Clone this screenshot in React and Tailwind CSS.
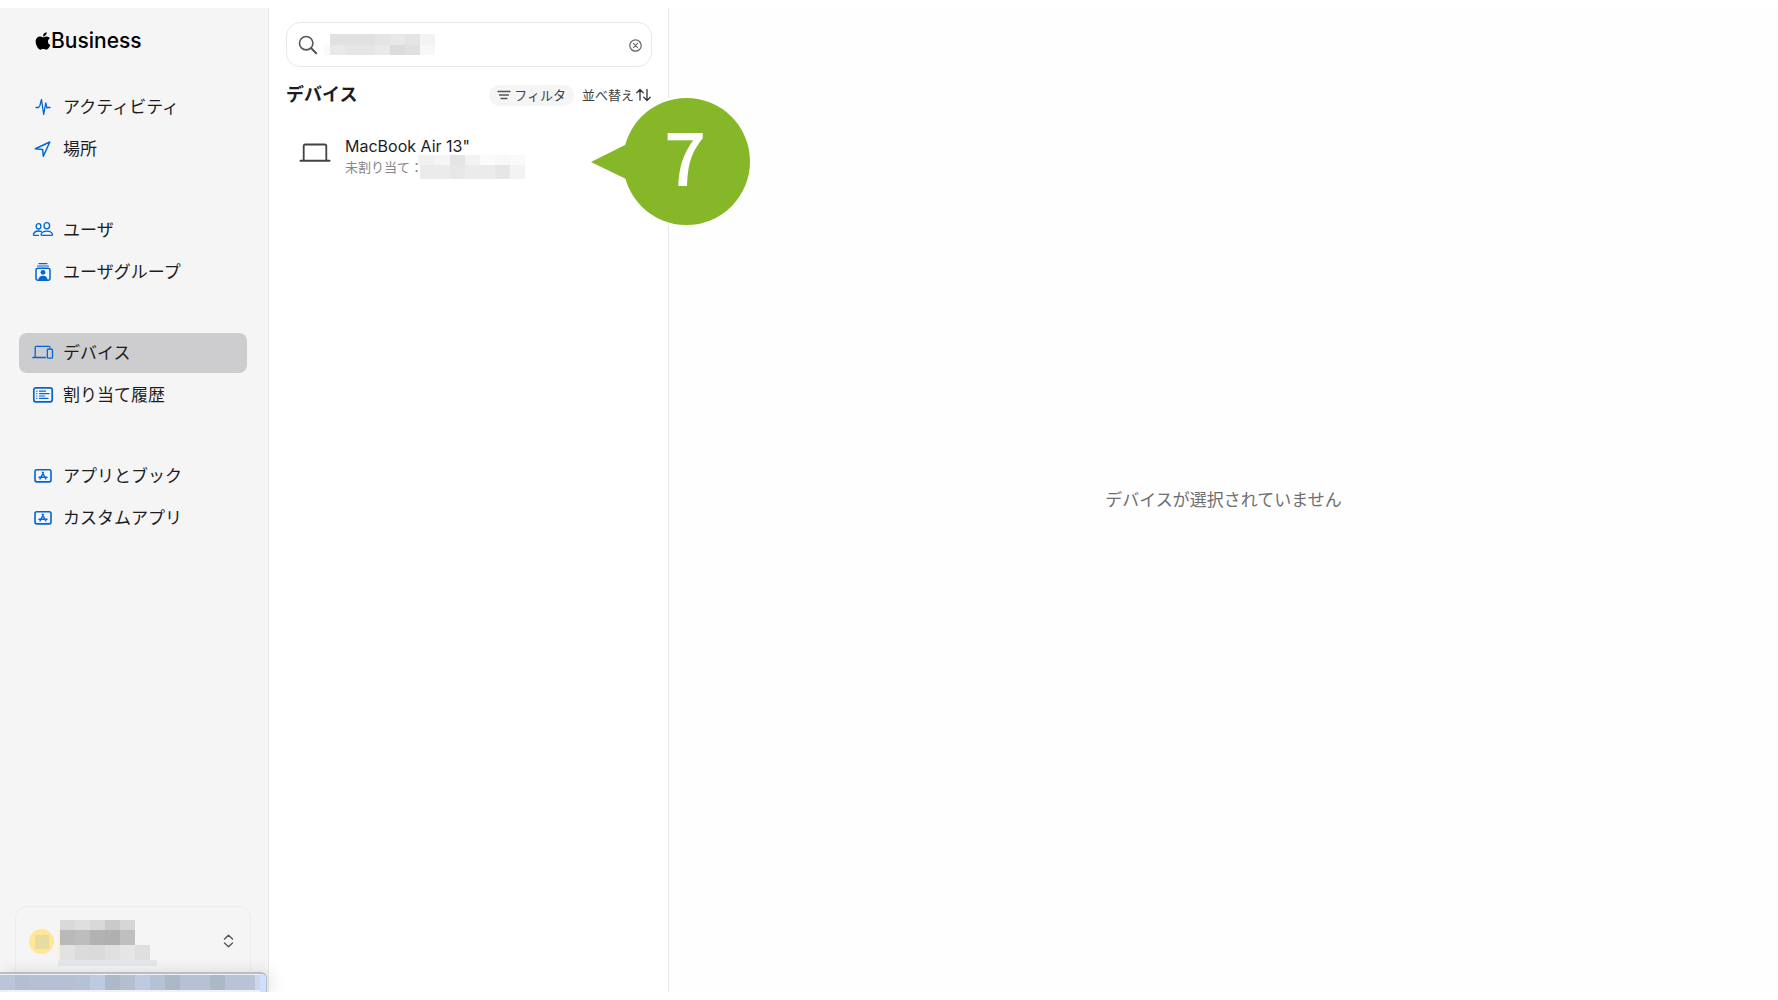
import { FaApple } from "react-icons/fa";

const NAV_GROUPS = [
  [
    { label: "アクティビティ", icon: ActivityIcon },
    { label: "場所", icon: LocationIcon },
  ],
  [
    { label: "ユーザ", icon: UsersIcon },
    { label: "ユーザグループ", icon: UserGroupIcon },
  ],
  [
    { label: "デバイス", icon: DevicesIcon, active: true },
    { label: "割り当て履歴", icon: HistoryIcon },
  ],
  [
    { label: "アプリとブック", icon: AppIcon },
    { label: "カスタムアプリ", icon: AppIcon },
  ],
];

// each cell is [x, y, width, height, fill]
const SEARCH_CELLS = [
  [6, 0, 45, 11, "#e1e1e1"],
  [51, 0, 15, 11, "#e4e4e4"],
  [66, 0, 15, 11, "#e8e8e8"],
  [81, 0, 15, 11, "#e4e4e4"],
  [96, 0, 15, 11, "#f3f3f3"],
  [0, 11, 6, 10, "#fafafa"],
  [6, 11, 15, 10, "#e9e9e9"],
  [21, 11, 30, 10, "#e5e5e5"],
  [51, 11, 15, 10, "#e9e9e9"],
  [66, 11, 15, 10, "#dcdcdc"],
  [81, 11, 15, 10, "#e0e0e0"],
  [96, 11, 15, 10, "#f7f7f7"],
];

const SERIAL_CELLS = [
  [0, 0, 17, 10, "#f1f1f1"],
  [17, 0, 15, 10, "#f5f5f5"],
  [32, 0, 15, 10, "#e4e4e4"],
  [47, 0, 15, 10, "#f3f3f3"],
  [62, 0, 15, 10, "#fbfbfb"],
  [77, 0, 15, 10, "#f8f8f8"],
  [92, 0, 15, 10, "#fafafa"],
  [2, 10, 30, 14, "#ebebeb"],
  [32, 10, 15, 14, "#e7e7e7"],
  [47, 10, 30, 14, "#ebebeb"],
  [77, 10, 15, 14, "#e6e6e6"],
  [92, 10, 15, 14, "#f3f3f3"],
];

const ACCOUNT_CELLS = [
  [2, 0, 15, 10, "#d9d9d9"],
  [17, 0, 15, 10, "#dfdfdf"],
  [32, 0, 15, 10, "#d9d9d9"],
  [47, 0, 15, 10, "#cacaca"],
  [62, 0, 15, 10, "#d6d6d6"],
  [0, 10, 2, 30, "#fbf0d9"],
  [2, 10, 15, 15, "#b9b9b9"],
  [17, 10, 15, 15, "#bdbdbd"],
  [32, 10, 15, 15, "#b2b2b2"],
  [47, 10, 15, 15, "#b0b0b0"],
  [62, 10, 15, 15, "#bfbfbf"],
  [2, 25, 15, 15, "#e2e2e2"],
  [17, 25, 15, 15, "#dbdbdb"],
  [32, 25, 15, 15, "#dadada"],
  [47, 25, 15, 15, "#e0e0e0"],
  [62, 25, 15, 15, "#e6e6e6"],
  [77, 25, 15, 15, "#dfdfdf"],
  [0, 40, 99, 6, "#e4e8eb"],
];

const STATUS_CELLS = [
  "#bac5d8", "#b3bfd0", "#b5c0d1", "#b5c0d4", "#b5c0d3", "#b5c1d4",
  "#bdcadf", "#adb9c8", "#b3bfcf", "#bdcadf", "#b5c2d3", "#abb8c6",
  "#b6c2d4", "#b6c2d4", "#abb8c6", "#b8c4d6", "#b8c4d6",
].map((fill, i) => [i * 15, 0, 15, 15, fill]);

function Mosaic({ cells, width, height, className = "" }) {
  return (
    <svg
      width={width}
      height={height}
      viewBox={`0 0 ${width} ${height}`}
      shapeRendering="crispEdges"
      aria-hidden="true"
      className={"shrink-0 " + className}
    >
      {cells.map(([x, y, w, h, fill]) => (
        <rect key={`${x}-${y}`} x={x} y={y} width={w} height={h} fill={fill} />
      ))}
    </svg>
  );
}

function NavSvg({ children }) {
  return (
    <svg
      width="22"
      height="20"
      viewBox="0 0 22 20"
      fill="none"
      stroke="currentColor"
      strokeWidth="1.3"
      strokeLinecap="round"
      strokeLinejoin="round"
      aria-hidden="true"
      className="shrink-0 text-[#0066d6]"
    >
      {children}
    </svg>
  );
}

function ActivityIcon() {
  return (
    <NavSvg>
      <path d="M4 10.5h2.6l1.3-2 1.6-6 2.2 15 2-11.5 1.3 5 .9-.5H18" />
    </NavSvg>
  );
}

function LocationIcon() {
  return (
    <NavSvg>
      <path d="M3.3 9.7 17.8 3 11.3 17.3 10.6 10.4Z" strokeWidth="1.5" />
    </NavSvg>
  );
}

function UsersIcon() {
  return (
    <NavSvg>
      <ellipse cx="6.5" cy="6.3" rx="2.4" ry="2.7" />
      <ellipse cx="14.8" cy="5.7" rx="2.8" ry="3.1" />
      <path d="M9.4 11.8c-.8-.5-1.8-.8-2.9-.8-2.8 0-4.7 1.8-5.1 3.4-.1.6.2.9.7.9h4.4" />
      <path d="M14.8 11.1c-3.2 0-5.3 1.7-5.7 3.3-.1.6.2.9.7.9h10c.5 0 .8-.3.7-.9-.4-1.6-2.5-3.3-5.7-3.3Z" />
    </NavSvg>
  );
}

function UserGroupIcon() {
  return (
    <NavSvg>
      <path d="M7 1.6h8M5.5 4h11" strokeWidth="1.2" />
      <rect x="4" y="6.2" width="14" height="12" rx="2" strokeWidth="1.5" />
      <circle cx="11" cy="10.3" r="2.4" fill="currentColor" stroke="none" />
      <path d="M6.3 18c.3-2.7 2.2-4.2 4.7-4.2s4.4 1.5 4.7 4.2Z" fill="currentColor" stroke="none" />
    </NavSvg>
  );
}

function DevicesIcon() {
  return (
    <NavSvg>
      <path d="M.8 14.5h12.7M3.2 14.5v-10c0-.8.4-1.2 1.2-1.2h12.4c.8 0 1.2.3 1.2 1" />
      <rect x="15.3" y="6" width="5.2" height="9.2" rx="1.3" />
    </NavSvg>
  );
}

function HistoryIcon() {
  return (
    <NavSvg>
      <rect x="1.8" y="2.8" width="18.4" height="14" rx="2" strokeWidth="1.7" />
      <path d="M7.5 6.2h6M7.5 8.6h9.5M7.5 11h5M7.5 13.4h8.5" strokeWidth="1.2" />
      <path d="M4.7 6.2h.2M4.7 8.6h.2M4.7 11h.2M4.7 13.4h.2" strokeWidth="1.2" />
    </NavSvg>
  );
}

function AppIcon() {
  return (
    <NavSvg>
      <rect x="3" y="3.7" width="16" height="12.2" rx="1.8" strokeWidth="1.6" />
      <path d="M10.3 6.2 13.8 13M11.4 6.5 8 13M7 11.2h4.6M13.6 11.2H15" strokeWidth="1.4" />
    </NavSvg>
  );
}

function NavItem({ item }) {
  const Icon = item.icon;

  return (
    <li>
      <a
        href="#"
        aria-current={item.active ? "page" : undefined}
        className={
          "flex h-10 items-center gap-[9px] rounded-lg px-[13px] text-[17px] leading-6 text-[#1d1d1f] " +
          (item.active ? "bg-[#cdcdcf]" : "")
        }
      >
        <Icon />
        <span>{item.label}</span>
      </a>
    </li>
  );
}

function Sidebar() {
  return (
    <aside className="flex w-[269px] shrink-0 flex-col border-r border-[#e8e8e8] bg-[#f5f5f5]">
      <div className="flex h-[66px] items-center pl-[35px] text-black">
        <FaApple className="h-5 w-4" aria-hidden="true" />
        <span className="text-[21px] leading-7 font-medium">Business</span>
      </div>

      <nav className="mt-[13px] flex flex-col gap-[41px] pr-[21px] pl-[19px]">
        {NAV_GROUPS.map((group) => (
          <ul key={group[0].label} className="flex flex-col gap-[2px]">
            {group.map((item) => (
              <NavItem key={item.label} item={item} />
            ))}
          </ul>
        ))}
      </nav>

      <button
        type="button"
        aria-label="アカウント"
        className="mt-auto mr-[17px] ml-[15px] flex h-[86px] items-start rounded-xl border border-[#ececec] pt-[13px] pr-4 pl-[13px]"
      >
        <span className="mt-[9px] flex size-[25px] items-center justify-center rounded-full bg-[#ffe796]">
          <span className="size-[14px] bg-[#e8dba2]" />
        </span>
        <Mosaic cells={ACCOUNT_CELLS} width={99} height={46} className="ml-1" />
        <svg
          width="11"
          height="14"
          viewBox="0 0 11 14"
          fill="none"
          stroke="#555"
          strokeWidth="1.4"
          strokeLinecap="round"
          strokeLinejoin="round"
          aria-hidden="true"
          className="mt-[14px] ml-auto"
        >
          <path d="M1.5 5 5.5 1.3 9.5 5M1.5 9l4 3.7L9.5 9" />
        </svg>
      </button>
    </aside>
  );
}

// link preview strip over the bottom of the sidebar
function StatusStrip() {
  return (
    <div className="absolute bottom-2 left-0 overflow-hidden pt-6 pr-6">
      <div className="flex h-5 w-[267px] overflow-hidden rounded-tr-md border-t-2 border-r border-[#b9bcc4] bg-[#eef2f8] shadow-[4px_0_16px_rgba(0,0,0,0.12)]">
        <Mosaic cells={STATUS_CELLS} width={255} height={15} className="mt-px" />
        <span className="mt-px h-[15px] w-[5px] bg-[#cbd7ea]" />
        <span className="flex-1 bg-[#cfdffc]" />
      </div>
    </div>
  );
}

function SearchBox() {
  return (
    <div className="flex h-[45px] items-center rounded-[14px] border border-[#e8e8e8] pr-[9px] pl-[11px]">
      <svg
        width="20"
        height="20"
        viewBox="0 0 20 20"
        fill="none"
        stroke="#55555a"
        strokeWidth="1.6"
        strokeLinecap="round"
        aria-hidden="true"
        className="shrink-0"
      >
        <circle cx="8.2" cy="8.2" r="6.7" />
        <path d="m13.2 13.2 5 5" strokeWidth="2" />
      </svg>
      <Mosaic cells={SEARCH_CELLS} width={111} height={21} className="ml-[6px]" />
      <input
        type="text"
        aria-label="検索"
        className="h-8 min-w-0 flex-1 bg-transparent pl-1 text-[17px] outline-none"
      />
      <button type="button" aria-label="消去" className="shrink-0 pt-px">
        <svg width="13" height="13" viewBox="0 0 13 13" fill="none" stroke="#66666a" strokeLinecap="round">
          <circle cx="6.5" cy="6.5" r="5.7" strokeWidth="1.2" />
          <path d="m4.4 4.4 4.2 4.2M8.6 4.4 4.4 8.6" strokeWidth="1.1" />
        </svg>
      </button>
    </div>
  );
}

function DeviceList() {
  return (
    <section className="flex w-[400px] shrink-0 flex-col border-r border-[#e8e8e8] pt-[14px] pr-4 pl-[17px]">
      <SearchBox />

      <div className="mt-[17px] flex h-[22px] items-center text-[13px] leading-5 text-[#424245]">
        <h1 className="text-[18px] leading-6 font-bold text-[#1d1d1f]">デバイス</h1>
        <button
          type="button"
          className="ml-auto flex h-[21px] items-center gap-[3px] rounded-full bg-[#f5f5f5] px-2"
        >
          <svg width="14" height="10" viewBox="0 0 14 10" fill="none" stroke="#55555a" strokeWidth="1.3" strokeLinecap="round" aria-hidden="true">
            <path d="M1 1.5h12M2.5 5h9M4 8.5h6" />
          </svg>
          <span>フィルタ</span>
        </button>
        <button type="button" className="ml-2 flex items-center gap-px">
          <span>並べ替え</span>
          <svg width="17" height="14" viewBox="0 0 17 14" fill="none" stroke="#333336" strokeWidth="1.3" strokeLinecap="round" strokeLinejoin="round" aria-hidden="true">
            <path d="M5 12V1.5M1.8 4.7 5 1.5l3.2 3.2M12 1.5v11M8.8 9.3l3.2 3.2 3.2-3.2" />
          </svg>
        </button>
      </div>

      <ul className="mt-7">
        <li>
          <button type="button" className="flex w-full items-start pl-[13px] text-left">
            <svg width="32" height="20" viewBox="0 0 32 20" fill="none" stroke="#424245" strokeWidth="1.8" strokeLinecap="round" aria-hidden="true" className="mt-[9px] shrink-0">
              <path d="M4.7 17V3c0-1 .5-1.5 1.5-1.5h19.6c1 0 1.5.5 1.5 1.5v14" />
              <path d="M1.5 17.7h29" strokeWidth="2" />
            </svg>
            <span className="ml-[14px] block">
              <span className="block text-[16px] leading-6 text-[#1d1d1f]">MacBook Air 13"</span>
              <span className="flex h-5 items-start text-[13px] leading-5 text-[#86868b]">
                <span className="-mt-px shrink-0">未割り当て：</span>
                <Mosaic cells={SERIAL_CELLS} width={107} height={24} className="-mt-[3px] -ml-[5px]" />
              </span>
            </span>
          </button>
        </li>
      </ul>
    </section>
  );
}

function StepCallout() {
  return (
    <div className="absolute top-[97px] left-[590px] h-[130px] w-[162px]">
      <svg width="162" height="130" viewBox="0 0 162 130" aria-hidden="true" className="overflow-visible">
        <circle cx="96.5" cy="64.5" r="66" fill="#fff" />
        <circle cx="96.5" cy="64.5" r="63.5" fill="#86b728" />
        <path d="M1 65 36 47.5v34.5Z" fill="#86b728" />
      </svg>
      <span className="absolute inset-x-0 top-0 flex h-[114px] items-center justify-center pl-7 font-['Noto_Sans_CJK_JP',sans-serif] text-[74px] leading-none font-medium text-white">
        7
      </span>
    </div>
  );
}

export default function App() {
  return (
    <div className="relative flex h-screen bg-white py-2 font-['Inter','Noto_Sans_CJK_JP',sans-serif]">
      <Sidebar />
      <DeviceList />
      <main className="flex flex-1 items-center justify-center bg-[#fefefe]">
        <p className="text-[17px] leading-6 text-[#6e6e73]">デバイスが選択されていません</p>
      </main>
      <StatusStrip />
      <StepCallout />
    </div>
  );
}
